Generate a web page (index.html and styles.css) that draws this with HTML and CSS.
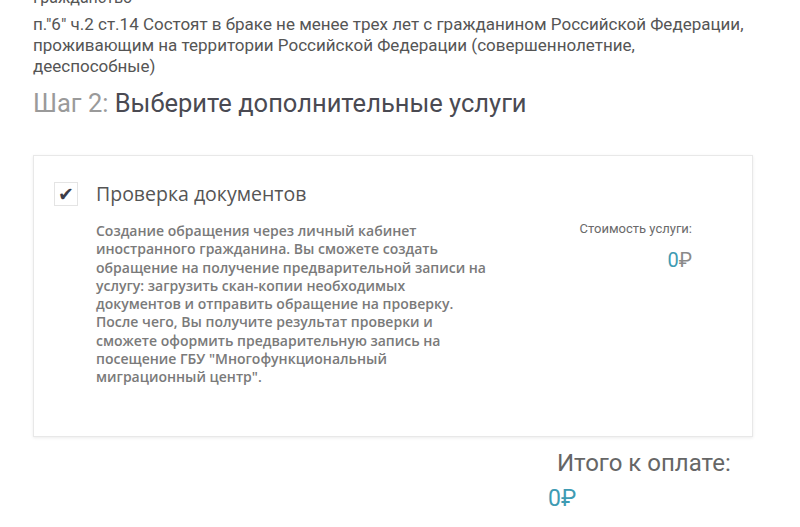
FILE: index.html
```html
<!DOCTYPE html>
<html lang="ru">
<head>
    <meta charset="UTF-8">
    <meta name="viewport" content="width=device-width, initial-scale=1.0">
    <title>Шаг 2: Дополнительные услуги</title>
    <link rel="stylesheet" href="styles.css">
</head>
<body>
    <div class="page">
        <p class="field-label">Гражданство</p>
        <p class="basis">п."6" ч.2 ст.14 Состоят в браке не менее трех лет с гражданином Российской Федерации, проживающим на территории Российской Федерации (совершеннолетние, дееспособные)</p>

        <h2 class="step-title"><span class="step-num">Шаг 2:</span> Выберите дополнительные услуги</h2>

        <div class="service-card">
            <div class="service-main">
                <div class="service-head">
                    <span class="checkbox">✔</span>
                    <span class="service-name">Проверка документов</span>
                </div>
                <p class="service-desc">Создание обращения через личный кабинет иностранного гражданина. Вы сможете создать обращение на получение предварительной записи на услугу: загрузить скан-копии необходимых документов и отправить обращение на проверку. После чего, Вы получите результат проверки и сможете оформить предварительную запись на посещение ГБУ "Многофункциональный миграционный центр".</p>
            </div>
            <div class="service-price">
                <span class="price-label">Стоимость услуги:</span>
                <span class="price"><span class="amount">0</span><span class="rub">₽</span></span>
            </div>
        </div>

        <div class="total">
            <span class="total-label">Итого к оплате:</span>
            <span class="total-sum"><span class="amount">0</span><span class="rub">₽</span></span>
        </div>
    </div>
</body>
</html>
```

FILE: styles.css
```css
* {
    margin: 0;
    padding: 0;
    box-sizing: border-box;
}

body {
    font-family: Roboto, "Liberation Sans", sans-serif;
    background-color: #fff;
    color: #555;
    overflow: hidden;
}

.page {
    width: 800px;
    padding: 0 47px 0 33px;
    margin-top: -12px;
}

.field-label {
    font-size: 16px;
    line-height: 20px;
    color: #555;
}

.basis {
    font-size: 17px;
    line-height: 21px;
    color: #555;
    margin-top: 6px;
}

.step-title {
    font-weight: 400;
    font-size: 25.5px;
    line-height: 32px;
    color: #4a4a52;
    margin-top: 10px;
}

.step-num {
    color: #9a9a9a;
}

.service-card {
    display: flex;
    justify-content: space-between;
    margin-top: 36px;
    padding: 24px 60px 30px 20px;
    border: 1px solid #e8e8e8;
    box-shadow: 0 1px 3px rgba(0, 0, 0, 0.08);
    min-height: 282px;
}

.service-head {
    display: flex;
    align-items: center;
    gap: 18px;
}

.checkbox {
    width: 24px;
    height: 24px;
    border: 1px solid #e4e4e4;
    display: flex;
    align-items: center;
    justify-content: center;
    font-family: "DejaVu Sans", sans-serif;
    font-size: 19px;
    color: #3c3c48;
}

.service-name {
    font-family: "Open Sans", sans-serif;
    font-size: 19.5px;
    color: #555;
}

.service-desc {
    font-family: "Open Sans", sans-serif;
    font-size: 14px;
    font-weight: 600;
    line-height: 18.25px;
    color: #7a7a7a;
    width: 395px;
    margin: 15px 0 0 42px;
}

.service-price {
    display: flex;
    flex-direction: column;
    align-items: flex-end;
    padding-top: 41px;
}

.price-label {
    font-size: 13px;
    color: #6a6a6a;
}

.price {
    font-size: 20px;
    margin-top: 12px;
}

.amount {
    color: #3e9bb3;
}

.rub {
    color: #8a8a8a;
}

.total {
    display: flex;
    flex-direction: column;
    align-items: flex-start;
    padding-left: 515px;
    margin-top: 12px;
}

.total-label {
    font-size: 24px;
    color: #666;
    margin-left: 9px;
}

.total-sum {
    font-size: 23px;
    margin-top: 8px;
}

.total-sum .rub {
    color: #3e9bb3;
}
```
